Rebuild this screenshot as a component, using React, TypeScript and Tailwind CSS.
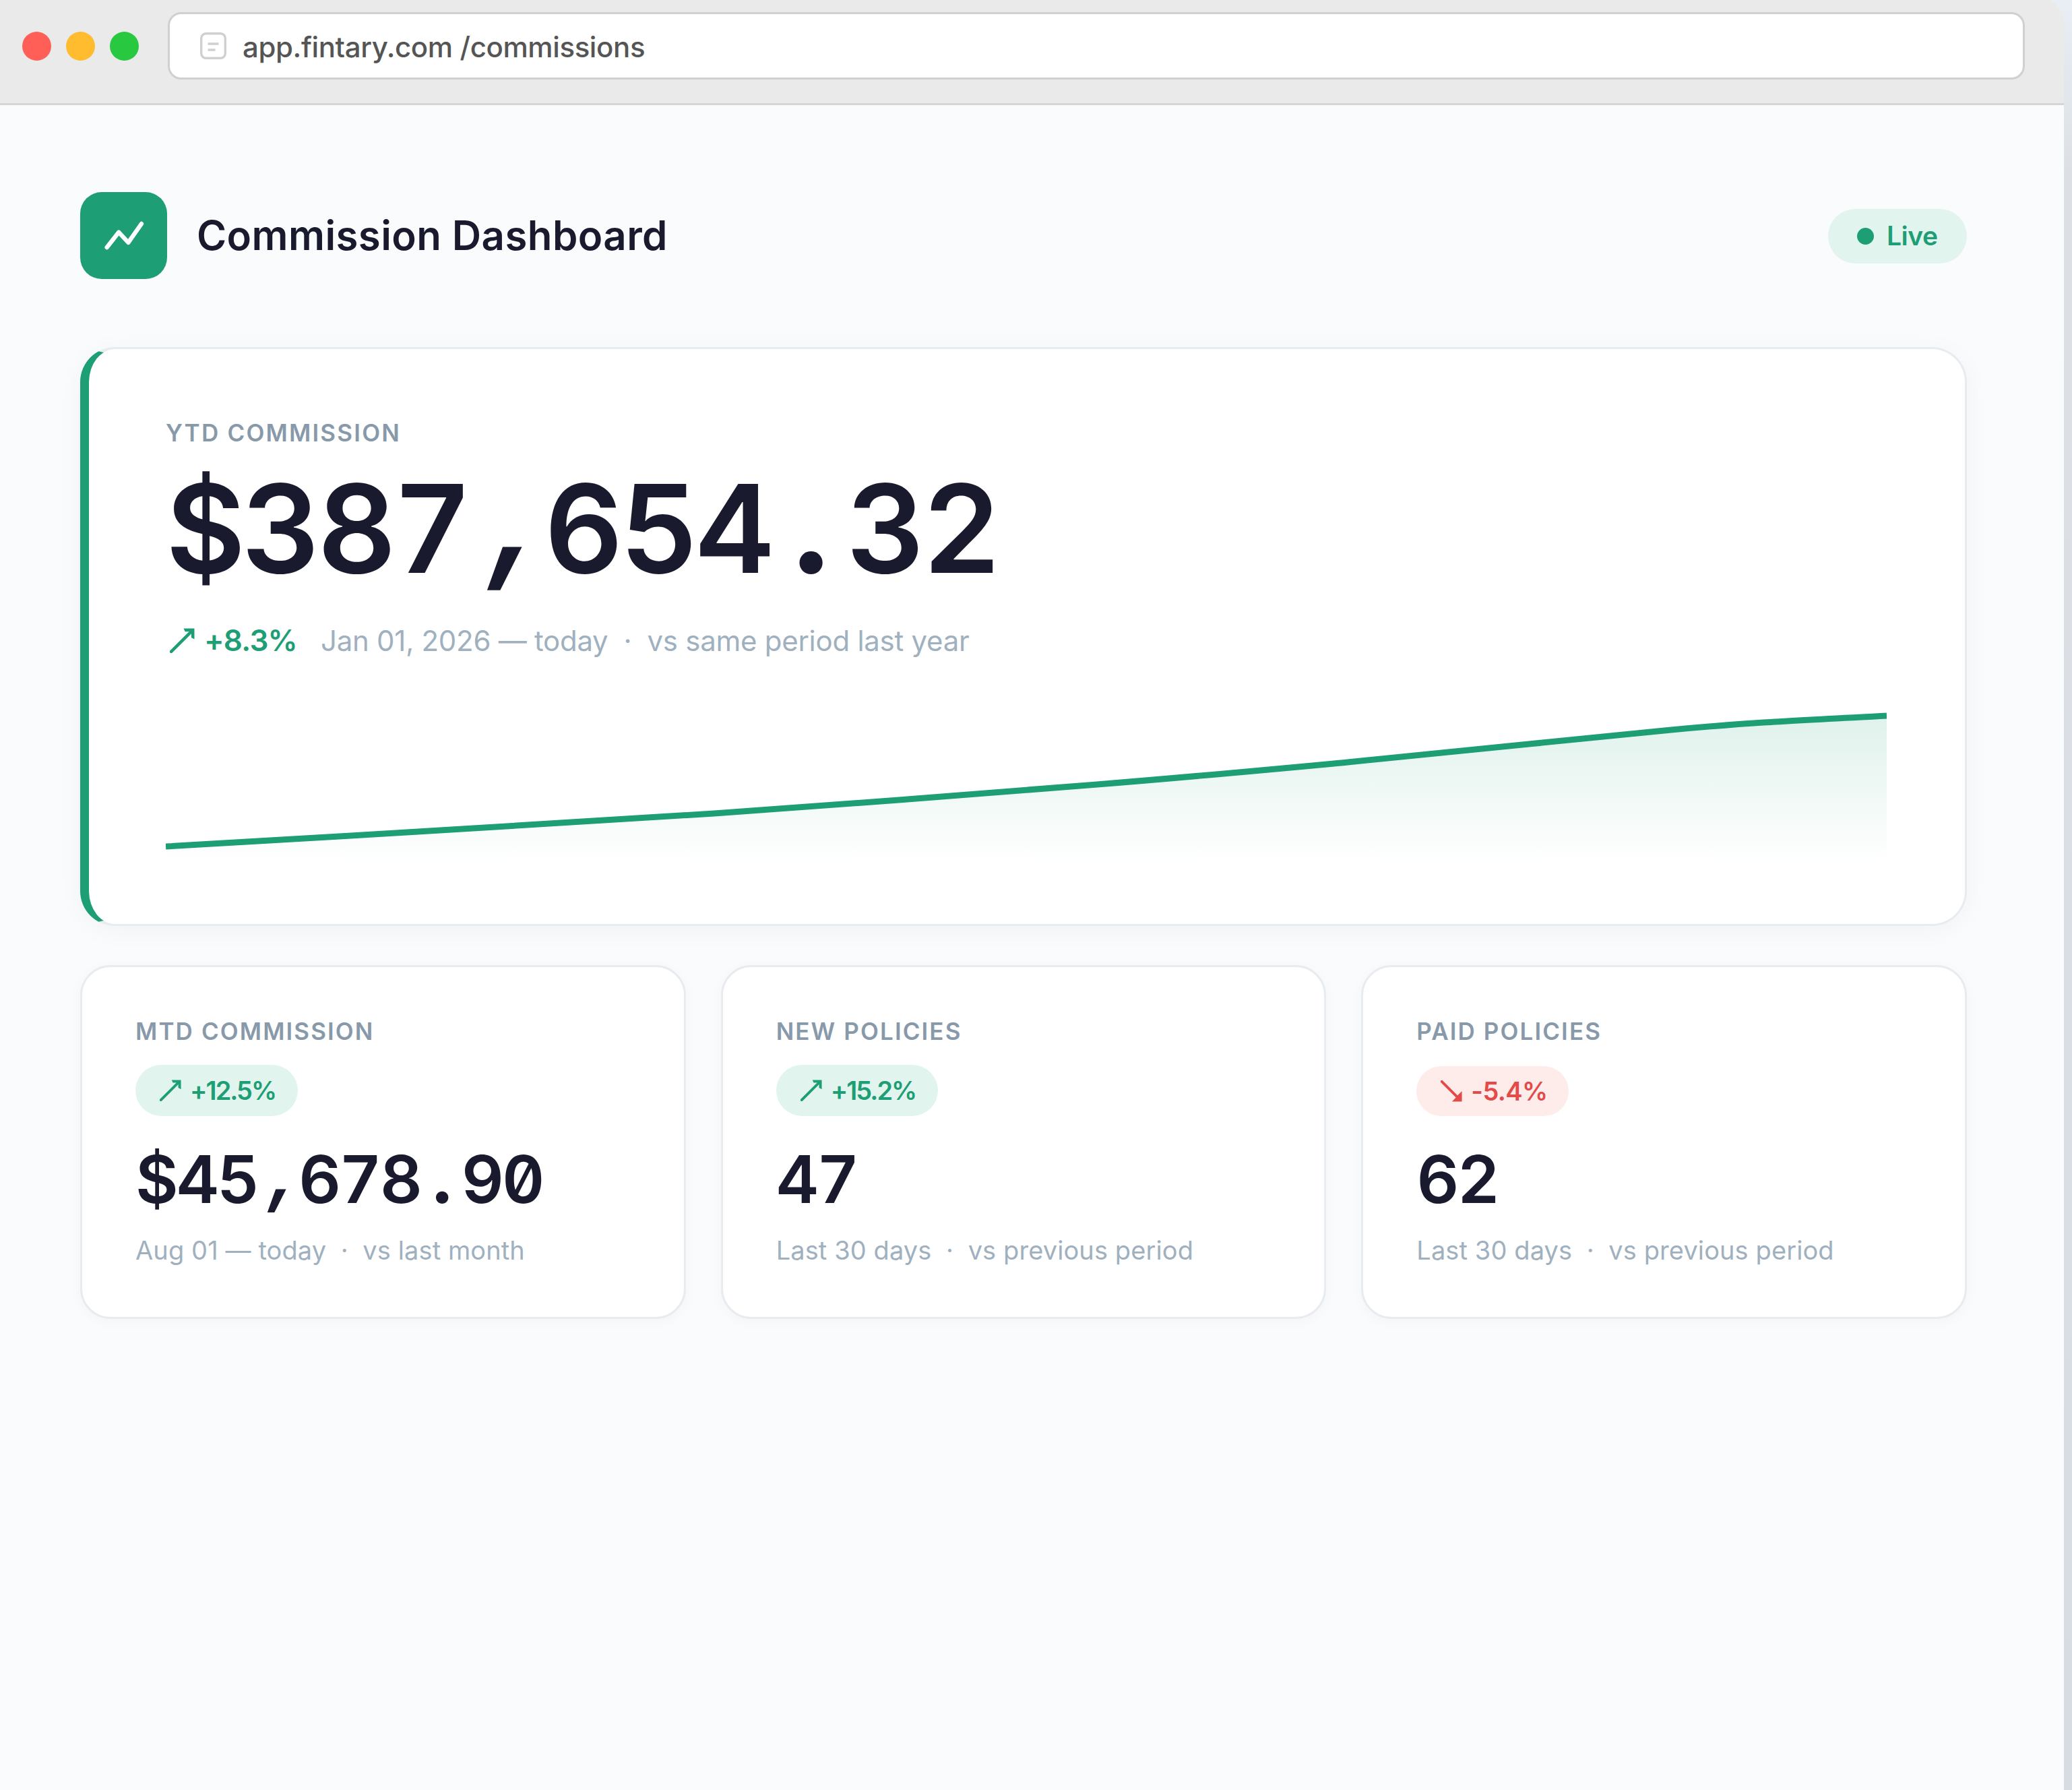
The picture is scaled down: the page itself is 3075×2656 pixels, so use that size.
import React from 'react';

type Trend = 'up' | 'down';

interface Stat {
  label: string;
  trend: Trend;
  change: string;
  value: string;
  range: string;
  compare: string;
}

const stats: Stat[] = [
  { label: 'MTD COMMISSION', trend: 'up', change: '+12.5%', value: '$45,678.90', range: 'Aug 01 — today', compare: 'vs last month' },
  { label: 'NEW POLICIES', trend: 'up', change: '+15.2%', value: '47', range: 'Last 30 days', compare: 'vs previous period' },
  { label: 'PAID POLICIES', trend: 'down', change: '-5.4%', value: '62', range: 'Last 30 days', compare: 'vs previous period' },
];

const chartPoints: [number, number][] = [
  [0, 216], [374, 194], [814, 167], [1382, 124], [1754, 91],
  [2028, 63.5], [2234, 43], [2371, 32], [2554, 22],
];

// Catmull-Rom through the points, written as cubic beziers
const smoothPath = (points: [number, number][]) =>
  points.reduce((d, [x, y], i) => {
    if (i === 0) return `M${x},${y}`;
    const prev = points[i - 1];
    const before = points[i - 2] || prev;
    const after = points[i + 1] || points[i];
    const c1 = [prev[0] + (x - before[0]) / 6, prev[1] + (y - before[1]) / 6];
    const c2 = [x - (after[0] - prev[0]) / 6, y - (after[1] - prev[1]) / 6];
    return `${d} C${c1[0]},${c1[1]} ${c2[0]},${c2[1]} ${x},${y}`;
  }, '');

const TrendArrow = ({ trend, className }: { trend: Trend; className: string }) => (
  <svg viewBox="0 0 36 36" className={className} fill="none">
    {trend === 'up' ? (
      <>
        <path d="M2 34L31 5" stroke="currentColor" strokeWidth="4.4" strokeLinecap="round" />
        <path d="M20 0.5H35.5V16L31 13.5V5H22Z" fill="currentColor" />
      </>
    ) : (
      <>
        <path d="M2 2L31 31" stroke="currentColor" strokeWidth="4.4" strokeLinecap="round" />
        <path d="M19 35.5H35.5V18L27 26.5L26 28Z" fill="currentColor" />
      </>
    )}
  </svg>
);

// Digits are tabular, so only the separators need a fixed cell
const Amount = ({ value }: { value: string }) => (
  <>
    {value.split(/([,.])/).map((part, i) => {
      if (part === ',') {
        return (
          <span key={i} className="inline-block w-[0.515em] -skew-x-12 pl-[0.17em] text-center align-[0.07em] text-[1.2em] leading-[0] tracking-normal">,</span>
        );
      }
      if (part === '.') {
        return (
          <span key={i} className="inline-block w-[0.515em] pl-[0.03em] text-center text-[1.2em] leading-[0] tracking-normal">.</span>
        );
      }
      return <span key={i}>{part}</span>;
    })}
  </>
);

const BrowserBar = () => (
  <div className="flex h-[161px] shrink-0 items-start border-b-[3px] border-[#d4d6d6] bg-[#eaeaea] pt-[23px] pr-[58px] pl-[33px]">
    <div className="flex h-[100px] items-center gap-[22px]">
      <span className="size-[43px] rounded-full bg-[#ff5f57]" />
      <span className="size-[43px] rounded-full bg-[#febc2e]" />
      <span className="size-[43px] rounded-full bg-[#28c840]" />
    </div>
    <div className="ml-[43px] flex h-[100px] flex-1 items-center rounded-[20px] border-[3px] border-[#d0d0d0] bg-white pl-[45px]">
      <svg viewBox="0 0 39 40" className="h-[40px] w-[39px]" fill="none" stroke="#d0d0d0" strokeWidth="3.4">
        <rect x="1.7" y="1.7" width="35.6" height="36.6" rx="7" />
        <path d="M11.5 17H27.5M11.5 26H22.5" />
      </svg>
      <span className="ml-[24px] pt-[2px] text-[42px] font-[450] tracking-[-0.4px] whitespace-pre text-[#555555]">app.fintary.com /commissions</span>
    </div>
  </div>
);

const Header = () => (
  <div className="flex h-[130px] items-center">
    <div className="flex size-[129px] items-center justify-center rounded-[32px] bg-[#1d9e75]">
      <svg viewBox="0 0 60 44" className="h-[44px] w-[60px]" fill="none" stroke="#ffffff" strokeWidth="6.4" strokeLinecap="round" strokeLinejoin="round">
        <path d="M4.7 40L22.3 17.6L36.4 32.9L56 5" />
      </svg>
    </div>
    <h1 className="ml-[44px] text-[60px] font-semibold tracking-[0.4px] text-[#1a1a2e]">Commission Dashboard</h1>
    <div className="mt-[2px] ml-auto flex h-[81px] w-[206px] items-center rounded-full bg-[#e1f5ee] pl-[43px] text-[39px] font-semibold tracking-[-0.5px] text-[#1d9e75]">
      <span className="mr-[19px] size-[25px] rounded-full bg-[#1d9e75]" />
      Live
    </div>
  </div>
);

const YtdCard = () => {
  const line = smoothPath(chartPoints);
  return (
    <div className="mt-[101px] flex h-[859px] flex-col rounded-[52px] border-[3px] border-l-[13px] border-[#e8ebf0] border-l-[#1d9e75] bg-white pr-[116px] pl-[114px] shadow-[0_6px_39px_rgba(0,0,0,0.04)]">
      <div className="mt-[99px] text-[35px] leading-[50px] font-semibold tracking-[2.2px] text-[#8899aa]">YTD COMMISSION</div>
      <div className="mt-[12px] text-[182px] leading-[210px] font-[560] tracking-[-0.031em] text-[#1a1a2e] [font-feature-settings:'tnum','zero']">
        <Amount value="$387,654.32" />
      </div>
      <div className="mt-[31px] flex h-[60px] items-center">
        <TrendArrow trend="up" className="ml-[6px] size-[37px] text-[#1d9e75]" />
        <span className="ml-[14px] text-[44px] font-semibold tracking-[-0.8px] text-[#1d9e75]">+8.3%</span>
        <span className="ml-[35px] text-[42px] tracking-[-0.27px] whitespace-pre text-[#9fb0bf]">Jan 01, 2026 — today  ·  vs same period last year</span>
      </div>
      <svg viewBox="0 0 2554 240" className="mt-[60px] h-[240px] w-[2554px]" fill="none">
        <defs>
          <linearGradient id="ytdFill" x1="0" y1="0" x2="0" y2="1">
            <stop offset="0" stopColor="#1d9e75" stopOpacity="0.14" />
            <stop offset="1" stopColor="#1d9e75" stopOpacity="0" />
          </linearGradient>
        </defs>
        <path d={`${line} V240 H0 Z`} fill="url(#ytdFill)" />
        <path d={line} stroke="#1d9e75" strokeWidth="9" />
      </svg>
    </div>
  );
};

const StatCard = ({ stat }: { stat: Stat }) => (
  <div className="flex h-[525px] flex-col items-start rounded-[45px] border-[3px] border-[#e8ebf0] bg-white pl-[79px] shadow-[0_4px_20px_rgba(0,0,0,0.03)]">
    <div className="mt-[70px] text-[35px] leading-[50px] font-semibold tracking-[2.1px] text-[#8899aa]">{stat.label}</div>
    <div
      className={`flex items-center gap-[13px] rounded-full pl-[36px] text-[38px] font-semibold ${
        stat.trend === 'up'
          ? 'mt-[25px] h-[76px] bg-[#e1f5ee] pr-[33px] tracking-[-2px] text-[#1d9e75]'
          : 'mt-[27px] h-[74px] bg-[#fdecea] pr-[31px] tracking-[-0.6px] text-[#e24b4a]'
      }`}
    >
      <TrendArrow trend={stat.trend} className="size-[32px]" />
      {stat.change}
    </div>
    <div className="mt-[34px] text-[98px] leading-[120px] font-[560] tracking-[-0.031em] text-[#1a1a2e] [font-feature-settings:'tnum','zero']">
      <Amount value={stat.value} />
    </div>
    <div className="mt-[20px] text-[38px] leading-[50px] tracking-[0.1px] whitespace-pre text-[#9fb0bf]">
      {stat.range}  ·  {stat.compare}
    </div>
  </div>
);

export default function App() {
  return (
    <div className="flex h-[2656px] w-[3075px] overflow-hidden bg-linear-to-b from-[#e8eef4] via-[#dce0e5] via-10% to-[#d7dce3] font-['Inter',sans-serif]">
      <div className="-mt-[5px] flex w-[3063px] flex-col overflow-hidden rounded-tr-[39px] bg-[#fafbfd]">
        <BrowserBar />
        <div className="flex flex-col pt-[128px] pr-[144px] pl-[119px]">
          <Header />
          <YtdCard />
          <div className="mt-[58px] grid grid-cols-3 gap-[52px]">
            {stats.map((stat) => (
              <StatCard key={stat.label} stat={stat} />
            ))}
          </div>
        </div>
      </div>
    </div>
  );
}
